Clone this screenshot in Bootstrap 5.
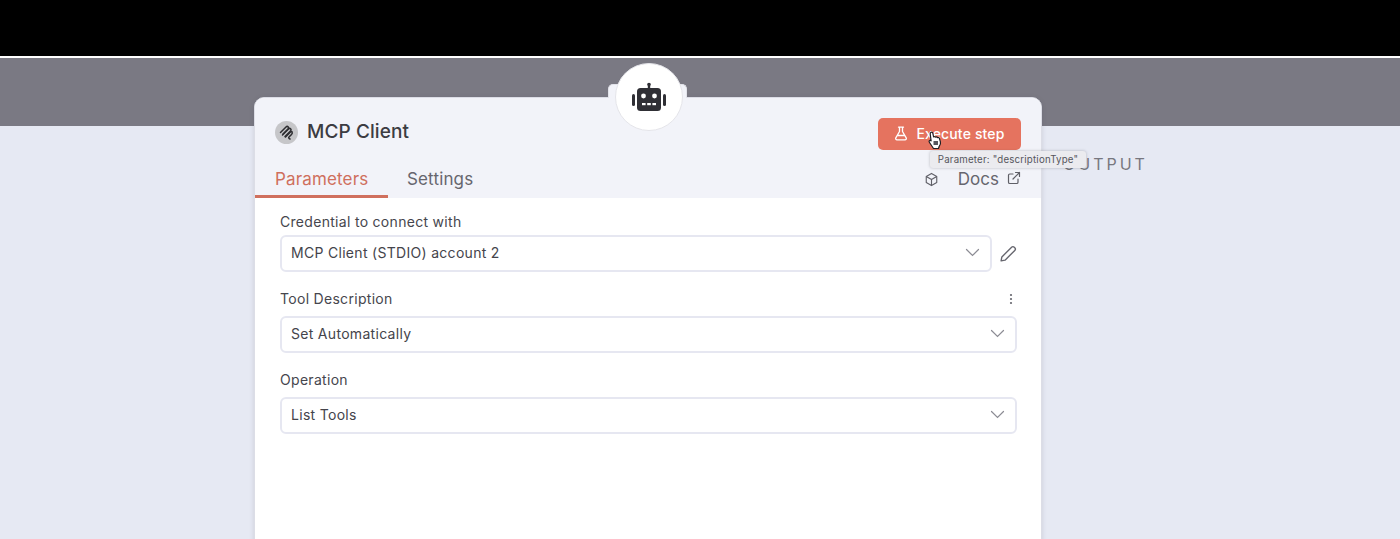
<!doctype html>
<html lang="en">
<head>
<meta charset="utf-8">
<title>MCP Client</title>
<link href="https://cdn.jsdelivr.net/npm/bootstrap@5.3.0/dist/css/bootstrap.min.css" rel="stylesheet">
<style>
html,body{height:539px;overflow:hidden;margin:0}
body{font-family:Inter,"Liberation Sans",sans-serif;background:#e6e9f3;color:#3f3f46}
.top-black{height:56px;background:#000}
.top-line{height:2px;background:#fff}
.band-dark{height:68px;background:#7a7983}
.stage{position:relative;height:481px;overflow:hidden}
.overlay{position:absolute;left:0;right:0;top:0;bottom:0;display:flex;padding-left:254px}
.panel{position:relative;width:788px;height:470px;margin-top:39px;background:#fff;border:1px solid #dcdde6;border-radius:10px;box-shadow:0 1px 5px rgba(60,60,80,.16);flex:none}
.panel-head{background:#f2f3f9;height:100px;border-radius:9px 9px 0 0;position:relative}
.title-row{height:70px;padding:20px 20px 0 20px}
.node-ico{width:23px;height:23px;border-radius:50%;background:#c6c6c9;flex:none}
.node-title{font-size:19px;font-weight:500;color:#3c3c42;margin-left:9px;line-height:28px;letter-spacing:.1px}
.exec-btn{background:#e5735f;color:#fff;font-size:14px;font-weight:500;width:143px;height:32px;border-radius:5px;padding:0 0 2px;border:0;letter-spacing:.15px}
.tabs-row{height:30px;padding-right:20px}
.tab-item{font-size:17px;line-height:20px;padding:1px 20px 0;height:30px;color:#66666e;font-weight:400;letter-spacing:.15px}
.tab-active{color:#cf6f5d;border-bottom:3px solid #d0705e;width:133px;white-space:nowrap}
.tab-second{padding-left:19px}
.tab-tools{padding-top:1px}
.docs-txt{font-size:17px;color:#66666e;margin:0 8px 0 19px;line-height:20px}
.ext-ico{margin-top:-3px}
.panel-form{padding:14px 24px 0 25px}
.fld-label{font-size:14px;line-height:20px;color:#46464d;letter-spacing:.3px}
.lbl-first{margin-bottom:3px}
.lbl-next{margin-top:17px;margin-bottom:7px}
.fake-select{height:37px;border:2px solid #e6e7f1;border-radius:6px;background:#fff;padding:0 10px 2px 9px;font-size:14px;color:#44444b;letter-spacing:.3px;flex:1 1 auto}
.pencil-box{width:25px;flex:none}
.robot-tab{position:absolute;left:353px;top:-14px;width:79px;height:24px;background:#f2f3f9;border-radius:5px 5px 0 0;border:1px solid #e2e3ea;border-bottom:0}
.robot-circle{position:absolute;left:360px;top:-35px;width:68px;height:68px;background:#fff;border-radius:50%;border:1px solid #e5e5ea;display:flex;align-items:center;justify-content:center}
.hint{position:absolute;left:675px;top:53px;width:156px;height:17px;background:#ebebef;border-radius:3px;box-shadow:0 0 3px rgba(40,40,50,.28);font-size:9.7px;line-height:17px;text-align:center;color:#55555c;letter-spacing:.2px;z-index:3;white-space:nowrap}
.cursor-ico{position:absolute;left:672px;top:33px;z-index:4}
.output-lbl{margin:96px 0 0 21px;font-size:16px;line-height:20px;letter-spacing:3px;color:#77777f;font-weight:400}
</style>
</head>
<body>
<div class="top-black"></div>
<div class="top-line"></div>
<div class="stage">
  <div class="band-dark"></div>
  <div class="overlay">
    <div class="panel">
      <div class="robot-tab"></div>
      <div class="panel-head">
        <div class="title-row d-flex justify-content-between align-items-start">
          <div class="d-flex align-items-center">
            <span class="node-ico d-flex align-items-center justify-content-center">
              <svg width="19" height="19" viewBox="0 0 19 19" fill="none" stroke="#2d2d31" stroke-width="1.5" stroke-linecap="round"><path d="M3.5 9.5 9 4c1.5-1.500 3.500.5 2 2L6 11"/><path d="M5.500 12 11.500 6c1.500-1.500 3.500.5 2 2L8 13.500"/><path d="M8.500 14 13.500 9c1.500-1.500 2.500 1 1 2.500l-2.500 2.500c-.8.8 0 1.700 1 2"/></svg>
            </span>
            <span class="node-title">MCP Client</span>
          </div>
          <button type="button" class="exec-btn d-flex align-items-center justify-content-center gap-2">
            <svg width="14" height="15" viewBox="0 0 14 15" fill="none" stroke="#fff" stroke-width="1.3" stroke-linejoin="round" stroke-linecap="round"><path d="M4.500 1.200h5M5.500 1.200v4.300L1.800 11.800c-.5 1 .1 2 1.200 2h8c1.100 0 1.700-1 1.200-2L8.500 5.500V1.200M3.800 9.500h6.400"/></svg>
            <span>Execute step</span>
          </button>
        </div>
        <div class="tabs-row d-flex justify-content-between align-items-start">
          <div class="d-flex">
            <div class="tab-item tab-active">Parameters</div>
            <div class="tab-item tab-second">Settings</div>
          </div>
          <div class="tab-tools d-flex align-items-center">
            <svg width="15" height="15" viewBox="0 0 16 16" fill="none" stroke="#5f5f67" stroke-width="1.200" stroke-linejoin="round"><path d="M8 1.500 13.600 4.700v6.600L8 14.500 2.400 11.300V4.700Z"/><path d="M2.400 4.700 8 8l5.600-3.300M8 8v6.500"/></svg>
            <span class="docs-txt">Docs</span>
            <svg class="ext-ico" width="14" height="14" viewBox="0 0 14 14" fill="none" stroke="#5f5f67" stroke-width="1.200" stroke-linecap="round" stroke-linejoin="round"><path d="M11 8v3.200c0 .7-.5 1.300-1.300 1.300H2.800c-.7 0-1.300-.6-1.300-1.300V4.300C1.500 3.500 2.100 3 2.800 3H6M8.500 1.500h4v4M12.500 1.500 6 8"/></svg>
          </div>
        </div>
      </div>
      <div class="panel-form">
        <div class="fld-label lbl-first">Credential to connect with</div>
        <div class="d-flex align-items-center">
          <div class="fake-select d-flex align-items-center justify-content-between">
            <span>MCP Client (STDIO) account 2</span>
            <svg width="15" height="9" viewBox="0 0 15 9" fill="none" stroke="#8c8c94" stroke-width="1.200" stroke-linecap="round"><path d="M1.500 1.500 7.500 7.500 13.500 1.500"/></svg>
          </div>
          <div class="pencil-box d-flex justify-content-end">
            <svg width="18" height="18" viewBox="0 0 17 17" fill="none" stroke="#66666e" stroke-width="1.300" stroke-linejoin="round"><path d="M2 15 2.700 11.300 11.900 2.100c.7-.7 1.800-.7 2.500 0l.5.500c.7.7.7 1.800 0 2.500L5.700 14.300Z"/></svg>
          </div>
        </div>
        <div class="lbl-next d-flex justify-content-between align-items-center fld-label">
          <span>Tool Description</span>
          <svg width="4" height="12" viewBox="0 0 4 12" fill="#66666e" class="me-1"><circle cx="2" cy="2" r="1.100"/><circle cx="2" cy="6" r="1.100"/><circle cx="2" cy="10" r="1.100"/></svg>
        </div>
        <div class="fake-select d-flex align-items-center justify-content-between">
          <span>Set Automatically</span>
          <svg width="15" height="9" viewBox="0 0 15 9" fill="none" stroke="#8c8c94" stroke-width="1.200" stroke-linecap="round"><path d="M1.500 1.500 7.500 7.500 13.500 1.500"/></svg>
        </div>
        <div class="lbl-next fld-label">Operation</div>
        <div class="fake-select d-flex align-items-center justify-content-between">
          <span>List Tools</span>
          <svg width="15" height="9" viewBox="0 0 15 9" fill="none" stroke="#8c8c94" stroke-width="1.200" stroke-linecap="round"><path d="M1.500 1.500 7.500 7.500 13.500 1.500"/></svg>
        </div>
      </div>
      <div class="robot-circle">
        <svg width="36" height="30" viewBox="0 0 36 30" fill="#2f2f35"><rect x="16.800" y="1" width="2.400" height="6"/><circle cx="18" cy="2.500" r="1.700"/><rect x="6" y="6" width="24" height="23" rx="3.500"/><rect x="1" y="12" width="3" height="12" rx="1.500"/><rect x="32" y="12" width="3" height="12" rx="1.500"/><circle cx="12.500" cy="14" r="2.400" fill="#fff"/><circle cx="23.500" cy="14" r="2.400" fill="#fff"/><rect x="11" y="21" width="3.600" height="2.200" fill="#fff"/><rect x="16.200" y="21" width="3.600" height="2.200" fill="#fff"/><rect x="21.400" y="21" width="3.600" height="2.200" fill="#fff"/></svg>
      </div>
      <div class="hint">Parameter: "descriptionType"</div>
      <svg class="cursor-ico" width="15" height="19" viewBox="0 0 15 19"><path d="M3.800 1.500c.8-.6 1.800-.2 2 .7l.8 3.800c.7-.4 1.500-.3 2 .2.7-.4 1.500-.2 2 .4.700-.3 1.500 0 1.800.7l1 3.500c.4 1.600-.1 3.300-1.200 4.500L11.500 17.500H6.500L2.500 11.500c-.6-.8-.5-1.700.2-2.100.5-.3 1 0 1.400.4L3.200 3c-.1-.6.100-1.100.6-1.500Z" fill="#fff" stroke="#1f1f23" stroke-width="1.200" stroke-linejoin="round"/><rect x="6.500" y="10" width="4.500" height="4" fill="#55555c"/></svg>
    </div>
    <div class="output-lbl">OUTPUT</div>
  </div>
</div>
<script src="https://cdn.jsdelivr.net/npm/bootstrap@5.3.0/dist/js/bootstrap.bundle.min.js"></script>
</body>
</html>
